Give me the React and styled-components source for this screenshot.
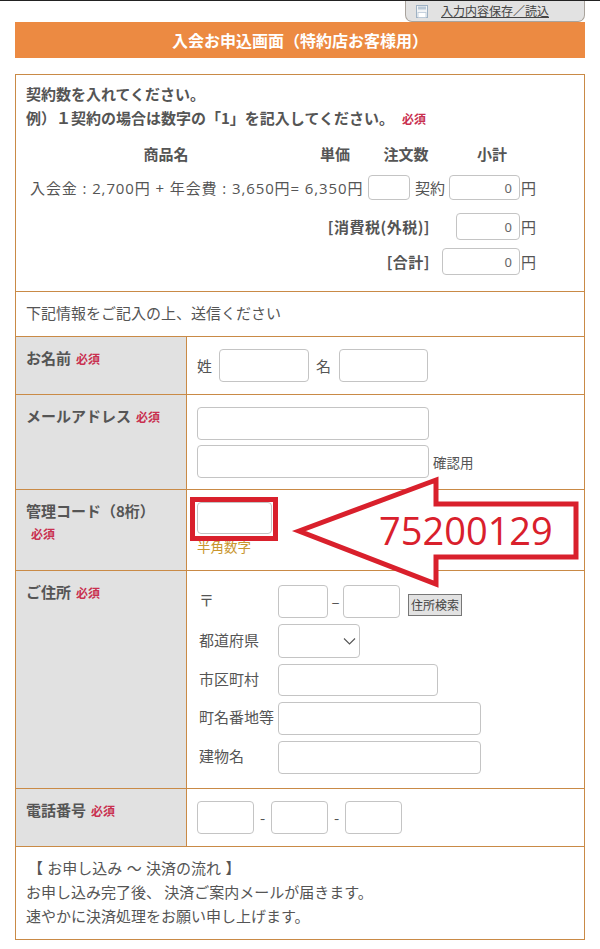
import React from "react";
import styled, { createGlobalStyle } from "styled-components";

const Global = createGlobalStyle`
  html, body { margin: 0; padding: 0; background: #fff; }
  body { font-family: "Noto Sans CJK JP", "Noto Sans", sans-serif; color: #555; font-size: 15px; }
  * { box-sizing: border-box; }
`;

const Page = styled.div`
  position: relative;
  width: 600px;
  height: 949px;
  overflow: hidden;
  border-top: 1px solid #222;
`;
const TabRow = styled.div`
  display: flex;
  justify-content: flex-end;
  padding-right: 15px;
  height: 21px;
`;
const SaveTab = styled.a`
  width: 180px;
  height: 21px;
  display: flex;
  align-items: center;
  padding-left: 10px;
  gap: 13px;
  background: #e2e2e2;
  border: 1px solid #a9a39c;
  border-top: none;
  border-radius: 0 0 7px 7px;
  color: #444;
  font-size: 12px;
  line-height: 16px;
  text-decoration: underline;
`;
const Banner = styled.h1`
  margin: 0 15px;
  height: 36px;
  display: flex;
  align-items: center;
  justify-content: center;
  background: #ec8a42;
  color: #fff;
  font-size: 16px;
  font-weight: 700;
`;
const Form = styled.div`
  margin: 16px 15px 0;
  border: 1px solid #c98a46;
  border-bottom: none;
`;
const Row = styled.div`
  display: flex;
  height: ${(p) => p.$h}px;
  border-bottom: 1px solid #c98a46;
`;
const Block = styled.div`
  height: ${(p) => p.$h}px;
  padding: ${(p) => p.$pad || "0 10px"};
  border-bottom: 1px solid #c98a46;
  line-height: 24px;
`;
const Strong = styled.div`
  font-weight: 700;
  font-size: 15px;
  line-height: 24px;
  color: #555;
`;
const Req = styled.span`
  color: #c9304f;
  font-size: 12px;
  font-weight: 700;
  margin-left: ${(p) => p.$ml ?? 5}px;
`;
const Heads = styled.div`
  display: flex;
  margin-top: 11px;
  height: 24px;
  font-weight: 700;
  font-size: 15px;
  line-height: 24px;
`;
const Head = styled.span`
  width: ${(p) => p.$w}px;
  margin-left: ${(p) => p.$ml || 0}px;
  text-align: center;
`;
const PriceRow = styled.div`
  display: flex;
  align-items: center;
  height: 25px;
  margin-top: 9px;
  line-height: 24px;
  white-space: nowrap;
`;
const ProductText = styled.span`
  flex: none;
  width: 342px;
  padding-left: 4px;
  font-family: "Open Sans", "Noto Sans CJK JP", sans-serif;
  font-size: 15px;
  letter-spacing: 0.9px;
`;
const Field = styled.input`
  display: block;
  flex: none;
  width: ${(p) => p.$w}px;
  height: ${(p) => p.$h || 33}px;
  margin: 0 ${(p) => p.$mr || 0}px 0 ${(p) => p.$ml || 0}px;
  padding: 0 7px 0 3px;
  background: #fff;
  border: 1px solid #c4c4c4;
  border-radius: 4px;
  font: 13px "Noto Sans", sans-serif;
  color: #666;
  text-align: ${(p) => p.$align || "left"};
  outline: none;
`;
const Unit = styled.span`
  margin-left: ${(p) => p.$ml || 0}px;
  font-size: 15px;
`;
const Sep = styled.span`
  flex: none;
  width: ${(p) => p.$w}px;
  text-align: center;
`;
const ConfirmNote = styled.span`
  margin-left: 4px;
  font-size: 13.5px;
`;
const SumRow = styled.div`
  display: flex;
  align-items: center;
  justify-content: flex-end;
  height: 27px;
  margin-top: ${(p) => p.$mt}px;
  padding-right: 38px;
`;
const SumLabel = styled.span`
  font-weight: 700;
  font-size: 15px;
  letter-spacing: 0.5px;
  margin-right: ${(p) => p.$mr}px;
`;
const Label = styled.div`
  flex: none;
  width: 171px;
  background: #e1e1e1;
  border-right: 1px solid #c98a46;
  padding: 9px 10px 0;
`;
const ReqLine = styled(Req)`
  display: block;
  margin-top: 2px;
`;
const Body = styled.div`
  flex: 1;
  padding: ${(p) => p.$pad};
`;
const Line = styled.div`
  display: flex;
  align-items: center;
  margin-top: ${(p) => p.$mt || 0}px;
  font-size: 15px;
`;
const Hint = styled.div`
  margin-top: 4px;
  font-size: 13.5px;
  line-height: 16px;
  color: #c9962e;
`;
const AddrLabel = styled.span`
  flex: none;
  width: 79px;
  padding: 0 0 4px 0;
  font-size: 15px;
  white-space: nowrap;
`;
const SearchBtn = styled.button`
  width: 54px;
  height: 22px;
  margin: 6px 0 0 8px;
  padding: 0;
  background: #e2e2e2;
  border: 1px solid #777;
  font: 12px "Noto Sans CJK JP", sans-serif;
  color: #444;
`;
const SelectBox = styled.div`
  flex: none;
  width: 82px;
  height: 34px;
  display: flex;
  align-items: center;
  justify-content: flex-end;
  padding-right: 3px;
  border: 1px solid #c4c4c4;
  border-radius: 4px;
  color: #555;
`;
const Footer = styled.div`
  height: 93px;
  padding: 9px 10px 0;
  border-bottom: 1px solid #c98a46;
  line-height: 24px;
  font-size: 15px;
`;
const FootLine = styled.div`
  padding-left: ${(p) => p.$pl || 0}px;
  word-spacing: ${(p) => p.$ws || 0}px;
`;
const RedBox = styled.div`
  position: absolute;
  left: 190px;
  top: 496px;
  width: 88px;
  height: 44px;
  border: 5px solid #d9202c;
`;
const Arrow = styled.svg`
  position: absolute;
  left: 290px;
  top: 470px;
  width: 300px;
  height: 120px;
`;
const BigCode = styled.div`
  position: absolute;
  left: 379px;
  top: 504px;
  font: 38px/50px "Open Sans", sans-serif;
  color: #d9202c;
`;

const FloppyIcon = () => (
  <svg width="12" height="13" viewBox="0 0 12 13">
    <rect x="0.5" y="0.5" width="11" height="12" fill="#f2f4f6" stroke="#9fb2c4" />
    <rect x="2" y="1.5" width="8" height="3" fill="#b9c8d6" />
    <rect x="2" y="7.5" width="8" height="5" fill="#fff" stroke="#b9c8d6" strokeWidth="0.8" />
  </svg>
);

export default function App() {
  return (
    <Page>
      <Global />
      <TabRow>
        <SaveTab>
          <FloppyIcon />
          入力内容保存／読込
        </SaveTab>
      </TabRow>
      <Banner>入会お申込画面（特約店お客様用）</Banner>
      <Form>
        <Block $h={217} $pad="7px 10px 0">
          <Strong>契約数を入れてください。</Strong>
          <Strong>
            例）１契約の場合は数字の「1」を記入してください。<Req $ml={8}>必須</Req>
          </Strong>
          <Heads>
            <Head $w={280}>商品名</Head>
            <Head $w={68} $ml={-5}>単価</Head>
            <Head $w={76} $ml={-1}>注文数</Head>
            <Head $w={80} $ml={8}>小計</Head>
          </Heads>
          <PriceRow>
            <ProductText>入会金 : 2,700円 + 年会費 : 3,650円= 6,350円</ProductText>
            <Field $w={42} $h={25} />
            <Unit $ml={5}>契約</Unit>
            <Field $w={71} $h={25} $ml={4} $align="right" defaultValue="0" />
            <Unit $ml={1}>円</Unit>
          </PriceRow>
          <SumRow $mt={13}>
            <SumLabel $mr={26}>[消費税(外税)]</SumLabel>
            <Field $w={64} $h={27} $align="right" defaultValue="0" />
            <Unit $ml={1}>円</Unit>
          </SumRow>
          <SumRow $mt={8}>
            <SumLabel $mr={12}>[合計]</SumLabel>
            <Field $w={78} $h={27} $align="right" defaultValue="0" />
            <Unit $ml={1}>円</Unit>
          </SumRow>
        </Block>
        <Block $h={45} $pad="9px 10px 0">下記情報をご記入の上、送信ください</Block>
        <Row $h={58}>
          <Label>
            <Strong>
              お名前<Req>必須</Req>
            </Strong>
          </Label>
          <Body $pad="12px 10px 0">
            <Line>
              姓<Field $w={90} $ml={7} />
              <Unit $ml={7}>名</Unit>
              <Field $w={89} $ml={8} />
            </Line>
          </Body>
        </Row>
        <Row $h={95}>
          <Label>
            <Strong>
              メールアドレス<Req>必須</Req>
            </Strong>
          </Label>
          <Body $pad="12px 10px 0">
            <Field $w={232} />
            <Line $mt={5}>
              <Field $w={232} />
              <ConfirmNote>確認用</ConfirmNote>
            </Line>
          </Body>
        </Row>
        <Row $h={81}>
          <Label>
            <Strong>管理コード（8桁）</Strong>
            <ReqLine>必須</ReqLine>
          </Label>
          <Body $pad="12px 10px 0">
            <Field $w={75} $h={32} />
            <Hint>半角数字</Hint>
          </Body>
        </Row>
        <Row $h={218}>
          <Label>
            <Strong>
              ご住所<Req>必須</Req>
            </Strong>
          </Label>
          <Body $pad="14px 12px 0">
            <Line>
              <AddrLabel>〒</AddrLabel>
              <Field $w={50} />
              <Sep $w={15}>–</Sep>
              <Field $w={57} />
              <SearchBtn>住所検索</SearchBtn>
            </Line>
            <Line $mt={6}>
              <AddrLabel>都道府県</AddrLabel>
              <SelectBox>
                <svg width="13" height="8" viewBox="0 0 13 8">
                  <path d="M1 1.5 6.5 7 12 1.5" fill="none" stroke="#555" strokeWidth="1.1" />
                </svg>
              </SelectBox>
            </Line>
            <Line $mt={6}>
              <AddrLabel>市区町村</AddrLabel>
              <Field $w={160} $h={32} />
            </Line>
            <Line $mt={6}>
              <AddrLabel>町名番地等</AddrLabel>
              <Field $w={203} />
            </Line>
            <Line $mt={6}>
              <AddrLabel>建物名</AddrLabel>
              <Field $w={203} />
            </Line>
          </Body>
        </Row>
        <Row $h={58}>
          <Label>
            <Strong>
              電話番号<Req>必須</Req>
            </Strong>
          </Label>
          <Body $pad="12px 10px 0">
            <Line>
              <Field $w={57} />
              <Sep $w={17}>-</Sep>
              <Field $w={57} />
              <Sep $w={17}>-</Sep>
              <Field $w={57} />
            </Line>
          </Body>
        </Row>
        <Footer>
          <FootLine $pl={2} $ws={1}>【 お申し込み ～ 決済の流れ 】</FootLine>
          <FootLine>お申し込み完了後、 決済ご案内メールが届きます。</FootLine>
          <FootLine>速やかに決済処理をお願い申し上げます。</FootLine>
        </Footer>
      </Form>
      <RedBox />
      <Arrow viewBox="0 0 300 120">
        <path
          d="M9 60 146 9v24h140v53H146v27z"
          fill="#fff"
          stroke="#d9202c"
          strokeWidth="5"
          strokeLinejoin="miter"
        />
      </Arrow>
      <BigCode>75200129</BigCode>
    </Page>
  );
}
